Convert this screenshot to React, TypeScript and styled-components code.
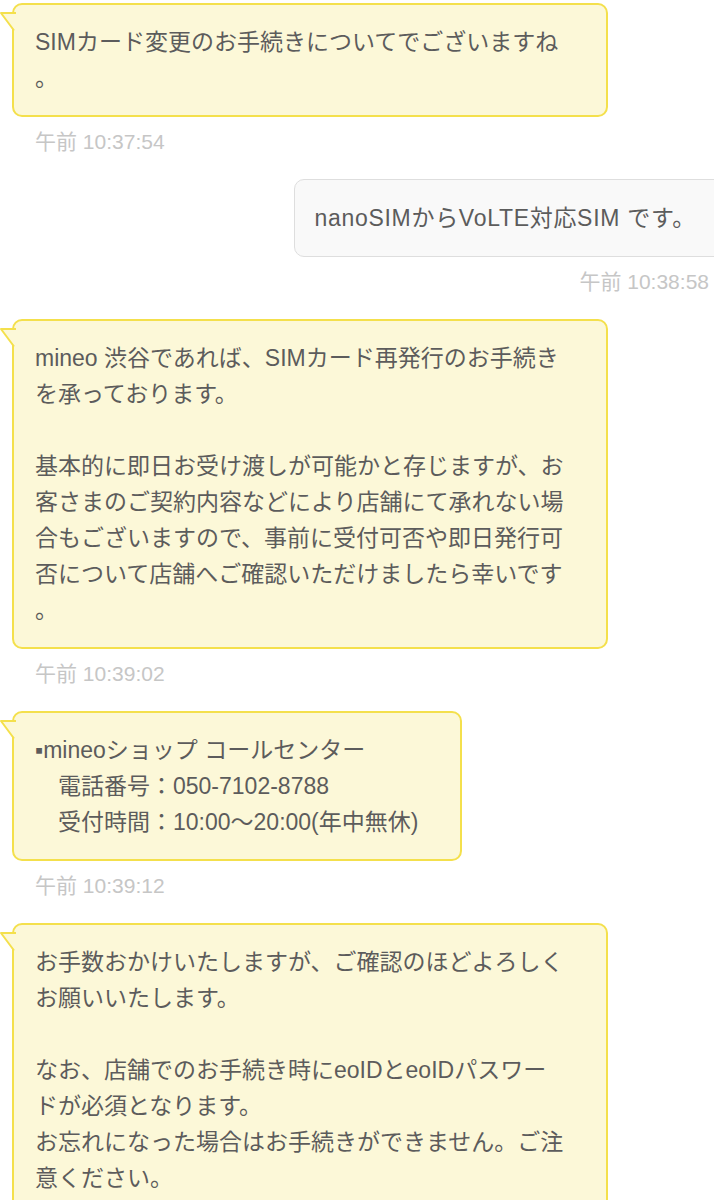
import React from "react";
import styled, { createGlobalStyle } from "styled-components";

const GlobalStyle = createGlobalStyle`
  html {
    overflow-x: hidden;
    scrollbar-width: none;
  }
  html::-webkit-scrollbar { display: none; }
  body {
    margin: 0;
    background: #ffffff;
    overflow-x: hidden;
    font-family: "Liberation Sans", "Noto Sans CJK JP", sans-serif;
  }
`;

const BOT_BG = "#fcf8d8";
const BOT_BORDER = "#f4e04c";

const Chat = styled.main`
  display: flex;
  flex-direction: column;
  padding-top: 3px;
`;

const Group = styled.section<{ $mine?: boolean }>`
  display: flex;
  flex-direction: column;
  align-items: ${(p) => (p.$mine ? "flex-end" : "flex-start")};
  padding: ${(p) => (p.$mine ? "0 5px 0 0" : "0 0 0 12px")};
  margin-bottom: 26px;
`;

const BotBubble = styled.div<{ $width: number }>`
  position: relative;
  box-sizing: border-box;
  width: ${(p) => p.$width}px;
  max-width: 596px;
  padding: 19px 21px;
  background: ${BOT_BG};
  border: 2px solid ${BOT_BORDER};
  border-radius: 10px;
  color: #5c5c5c;
  font-size: 23px;
  line-height: 36px;
`;

const UserBubble = styled.div`
  box-sizing: border-box;
  width: fit-content;
  margin-right: -16px;
  padding: 20px 28px 20px 20px;
  background: #f9f9f9;
  border: 1px solid #dedede;
  border-radius: 10px;
  color: #5c5c5c;
  font-size: 23px;
  line-height: 36px;
  letter-spacing: 0.7px;
`;

const Tail = styled.svg`
  position: absolute;
  left: -14px;
  top: 7px;
  width: 16px;
  height: 22px;
  overflow: visible;
`;

const Line = styled.span`
  display: block;
  white-space: pre;
  min-height: 36px;
`;

const Stamp = styled.div<{ $mine?: boolean }>`
  margin-top: 14px;
  margin-left: ${(p) => (p.$mine ? "0" : "23px")};
  color: #c6c6c6;
  font-size: 21px;
  line-height: 22px;
`;

type Msg = {
  mine?: boolean;
  width?: number;
  lines: string[];
  time: string;
};

const messages: Msg[] = [
  {
    width: 596,
    lines: ["SIMカード変更のお手続きについてでございますね", "。"],
    time: "午前 10:37:54",
  },
  {
    mine: true,
    lines: ["nanoSIMからVoLTE対応SIM です。"],
    time: "午前 10:38:58",
  },
  {
    width: 596,
    lines: [
      "mineo 渋谷であれば、SIMカード再発行のお手続き",
      "を承っております。",
      "",
      "基本的に即日お受け渡しが可能かと存じますが、お",
      "客さまのご契約内容などにより店舗にて承れない場",
      "合もございますので、事前に受付可否や即日発行可",
      "否について店舗へご確認いただけましたら幸いです",
      "。",
    ],
    time: "午前 10:39:02",
  },
  {
    width: 450,
    lines: [
      "▪mineoショップ コールセンター",
      "　電話番号：050-7102-8788",
      "　受付時間：10:00〜20:00(年中無休)",
    ],
    time: "午前 10:39:12",
  },
  {
    width: 596,
    lines: [
      "お手数おかけいたしますが、ご確認のほどよろしく",
      "お願いいたします。",
      "",
      "なお、店舗でのお手続き時にeoIDとeoIDパスワー",
      "ドが必須となります。",
      "お忘れになった場合はお手続きができません。ご注",
      "意ください。",
    ],
    time: "午前 10:40:05",
  },
];

const BubbleTail = () => (
  <Tail viewBox="0 0 16 22" aria-hidden="true">
    <polygon points="0,1 16,1 16,20" fill={BOT_BG} />
    <path d="M16 1 L1 1 L14 18.5" fill="none" stroke={BOT_BORDER} strokeWidth="2" strokeLinejoin="round" />
  </Tail>
);

export default function App() {
  return (
    <>
      <GlobalStyle />
      <Chat>
        {messages.map((m, i) => (
          <Group key={i} $mine={m.mine}>
            {m.mine ? (
              <UserBubble>
                {m.lines.map((l, j) => (
                  <Line key={j}>{l}</Line>
                ))}
              </UserBubble>
            ) : (
              <BotBubble $width={m.width ?? 596}>
                <BubbleTail />
                {m.lines.map((l, j) => (
                  <Line key={j}>{l}</Line>
                ))}
              </BotBubble>
            )}
            <Stamp $mine={m.mine}>{m.time}</Stamp>
          </Group>
        ))}
      </Chat>
    </>
  );
}
